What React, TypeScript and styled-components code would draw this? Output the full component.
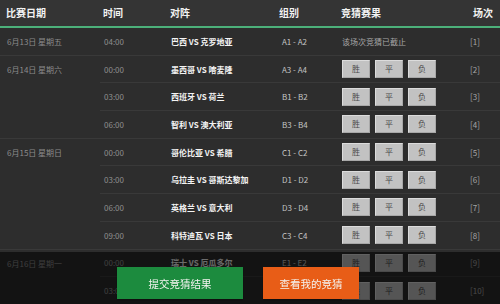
import React from "react";
import styled, { createGlobalStyle } from "styled-components";

const GlobalStyle = createGlobalStyle`
  html, body {
    margin: 0;
    padding: 0;
    background: #2d2d2d;
    overflow: hidden;
  }
  body {
    font-family: "Noto Sans CJK SC", "Noto Sans", sans-serif;
  }
`;

const Table = styled.table`
  width: 500px;
  border-collapse: collapse;
  table-layout: fixed;
`;

const Th = styled.th<{ $pl: number }>`
  height: 26px;
  padding: 0 0 0 ${(p) => p.$pl}px;
  background: #343434;
  border-bottom: 2px solid #4cb07a;
  color: #f2f2f2;
  font-size: 10px;
  font-weight: 700;
  text-align: left;
  line-height: 12px;
`;

const Td = styled.td<{ $pl: number; $color?: string; $bold?: boolean }>`
  height: 26.7px;
  padding: 0 0 0 ${(p) => p.$pl}px;
  border-bottom: 1px solid #393939;
  font-size: 8px;
  line-height: 11px;
  color: ${(p) => p.$color || "#9a9a9a"};
  font-weight: ${(p) => (p.$bold ? 700 : 400)};
  white-space: nowrap;
  vertical-align: middle;
`;

const DateTd = styled(Td)`
  height: auto;
  vertical-align: top;
  padding-top: 8px;
`;

const BtnGroup = styled.div`
  display: flex;
  gap: 5px;
`;

const PickBtn = styled.button`
  box-sizing: border-box;
  width: 28px;
  height: 18px;
  padding: 0;
  margin: 0;
  background: #c2c2c2;
  border: 1px solid #dcdcdc;
  border-right-color: #a8a8a8;
  border-bottom-color: #a8a8a8;
  color: #4a4a4a;
  font-family: inherit;
  font-size: 8px;
  line-height: 16px;
`;

const Overlay = styled.div`
  position: fixed;
  left: 0;
  right: 0;
  bottom: 0;
  height: 52px;
  box-sizing: border-box;
  padding: 15px 0 0 117px;
  background: rgba(0, 0, 0, 0.56);
  display: flex;
  align-items: flex-start;
  gap: 20px;
`;

const ActionBtn = styled.button<{ $bg: string; $w: number }>`
  box-sizing: border-box;
  width: ${(p) => p.$w}px;
  height: 32px;
  border: none;
  padding: 0;
  background: ${(p) => p.$bg};
  color: #f4f4f0;
  font-family: inherit;
  font-size: 10.5px;
  box-shadow: 0 1px 2px rgba(0, 0, 0, 0.4);
`;

type Row = {
  date?: string;
  span?: number;
  time: string;
  match: string;
  group: string;
  closed?: boolean;
  no: number;
};

const rows: Row[] = [
  { date: "6月13日 星期五", span: 1, time: "04:00", match: "巴西 VS 克罗地亚", group: "A1 - A2", closed: true, no: 1 },
  { date: "6月14日 星期六", span: 3, time: "00:00", match: "墨西哥 VS 喀麦隆", group: "A3 - A4", no: 2 },
  { time: "03:00", match: "西班牙 VS 荷兰", group: "B1 - B2", no: 3 },
  { time: "06:00", match: "智利 VS 澳大利亚", group: "B3 - B4", no: 4 },
  { date: "6月15日 星期日", span: 4, time: "00:00", match: "哥伦比亚 VS 希腊", group: "C1 - C2", no: 5 },
  { time: "03:00", match: "乌拉圭 VS 哥斯达黎加", group: "D1 - D2", no: 6 },
  { time: "06:00", match: "英格兰 VS 意大利", group: "D3 - D4", no: 7 },
  { time: "09:00", match: "科特迪瓦 VS 日本", group: "C3 - C4", no: 8 },
  { date: "6月16日 星期一", span: 2, time: "00:00", match: "瑞士 VS 厄瓜多尔", group: "E1 - E2", no: 9 },
  { time: "03:00", match: "法国 VS 洪都拉斯", group: "E3 - E4", no: 10 },
];

export default function App() {
  return (
    <>
      <GlobalStyle />
      <Table>
        <colgroup>
          <col style={{ width: 100 }} />
          <col style={{ width: 67 }} />
          <col style={{ width: 109 }} />
          <col style={{ width: 62 }} />
          <col style={{ width: 124 }} />
          <col style={{ width: 38 }} />
        </colgroup>
        <thead>
          <tr>
            <Th $pl={6}>比赛日期</Th>
            <Th $pl={3}>时间</Th>
            <Th $pl={3}>对阵</Th>
            <Th $pl={3}>组别</Th>
            <Th $pl={3}>竞猜赛果</Th>
            <Th $pl={11}>场次</Th>
          </tr>
        </thead>
        <tbody>
          {rows.map((r) => (
            <tr key={r.no}>
              {r.date && (
                <DateTd $pl={7} rowSpan={r.span} $color="#8c8c8c">
                  {r.date}
                </DateTd>
              )}
              <Td $pl={4} $color="#8f8f8f">{r.time}</Td>
              <Td $pl={4} $color="#f4f4f4" $bold>{r.match}</Td>
              <Td $pl={6} $color="#c4c4c4">{r.group}</Td>
              <Td $pl={4} $color="#a6a6a6">
                {r.closed ? (
                  "该场次竞猜已截止"
                ) : (
                  <BtnGroup>
                    <PickBtn>胜</PickBtn>
                    <PickBtn>平</PickBtn>
                    <PickBtn>负</PickBtn>
                  </BtnGroup>
                )}
              </Td>
              <Td $pl={8} $color="#a6a6a6">[{r.no}]</Td>
            </tr>
          ))}
        </tbody>
      </Table>
      <Overlay>
        <ActionBtn $bg="#1c8b3e" $w={126}>提交竞猜结果</ActionBtn>
        <ActionBtn $bg="#e85d17" $w={96}>查看我的竞猜</ActionBtn>
      </Overlay>
    </>
  );
}
